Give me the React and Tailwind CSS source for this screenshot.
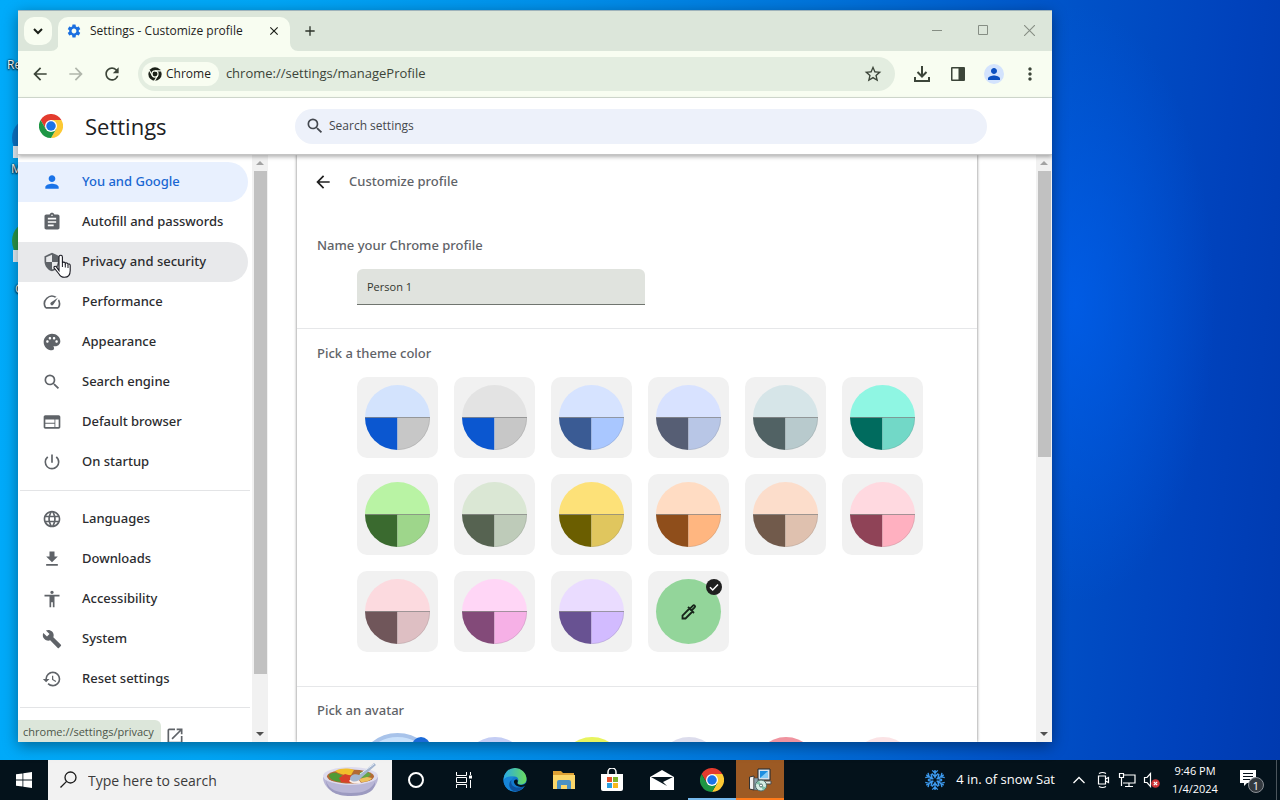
import React from "react";
import {
  MdPerson,
  MdAssignment,
  MdSecurity,
  MdPalette,
  MdSearch,
  MdWeb,
  MdPowerSettingsNew,
  MdLanguage,
  MdGetApp,
  MdAccessibility,
  MdBuild,
  MdHistory,
  MdOpenInNew,
  MdArrowBack,
  MdArrowForward,
  MdRefresh,
  MdStarOutline,
  MdMoreVert,
  MdSettings,
  MdClose,
  MdAdd,
  MdOutlineSpeed,
} from "react-icons/md";

const primaryMenu = [
  { label: "You and Google", icon: MdPerson, state: "active" },
  { label: "Autofill and passwords", icon: MdAssignment },
  { label: "Privacy and security", icon: MdSecurity, state: "hover" },
  { label: "Performance", icon: MdOutlineSpeed },
  { label: "Appearance", icon: MdPalette },
  { label: "Search engine", icon: MdSearch },
  { label: "Default browser", icon: MdWeb },
  { label: "On startup", icon: MdPowerSettingsNew },
];

const secondaryMenu = [
  { label: "Languages", icon: MdLanguage },
  { label: "Downloads", icon: MdGetApp },
  { label: "Accessibility", icon: MdAccessibility },
  { label: "System", icon: MdBuild },
  { label: "Reset settings", icon: MdHistory },
];

const themes = [
  { name: "Default", top: "#d3e3fd", left: "#0b57d0", right: "#c7c7c7" },
  { name: "Grey", top: "#e3e3e3", left: "#0b57d0", right: "#c7c7c7" },
  { name: "Blue", top: "#d6e3ff", left: "#3a5b94", right: "#a9c7ff" },
  { name: "Cool grey", top: "#d8e2ff", left: "#565e74", right: "#b8c6e6" },
  { name: "Slate", top: "#d6e5e8", left: "#516264", right: "#b8cacd" },
  { name: "Aqua", top: "#8ff6e3", left: "#006b5e", right: "#72d8c7" },
  { name: "Green", top: "#b9f3a4", left: "#3a6a2f", right: "#9ed68b" },
  { name: "Sage", top: "#dae7d4", left: "#566351", right: "#becbb9" },
  { name: "Citron", top: "#fde178", left: "#6b5e00", right: "#e0c65e" },
  { name: "Orange", top: "#ffdcc3", left: "#8f4e1b", right: "#ffb680" },
  { name: "Apricot", top: "#fcddcb", left: "#715a4b", right: "#dfc1af" },
  { name: "Rose", top: "#ffd9e0", left: "#8f4357", right: "#ffb0c0" },
  { name: "Pink", top: "#fcdadf", left: "#70565a", right: "#debfc3" },
  { name: "Fuchsia", top: "#ffd6f6", left: "#834a79", right: "#f6b0e6" },
  { name: "Violet", top: "#eadcff", left: "#685292", right: "#d2bbff" },
];

const avatars = ["#c4cdf4", "#e8f45e", "#dcdcec", "#f0939f", "#fbe3e5"];

const ChromeLogo = ({ className }) => (
  <svg viewBox="0 0 48 48" className={className} aria-hidden="true">
    <path d="M24 12H44.8A24 24 0 0 0 3.2 12L13.6 30Z" fill="#e33b2e" />
    <path d="M34.4 30 24 48A24 24 0 0 0 44.8 12H24Z" fill="#fcc934" />
    <path d="M13.6 30 3.2 12A24 24 0 0 0 24 48L34.4 30Z" fill="#1e9644" />
    <circle cx="24" cy="24" r="12" fill="#fff" />
    <circle cx="24" cy="24" r="9.5" fill="#1a73e8" />
  </svg>
);

const ChromeMono = ({ className }) => (
  <svg viewBox="0 0 48 48" className={className} aria-hidden="true">
    <circle cx="24" cy="24" r="23" fill="#1c2119" />
    <g stroke="#f8fdf1" strokeWidth="4" fill="none">
      <circle cx="24" cy="24" r="10.5" />
      <path d="M24 13.5H46M14.9 29.3 4 10.2M33.1 29.3 22 48" />
    </g>
  </svg>
);

const MenuItem = ({ item }) => {
  const Icon = item.icon;
  let tone = "text-[#2b2c2f]";
  let iconTone = "text-[#5f6368]";
  if (item.state === "active") {
    tone = "bg-[#e8f0fe] text-[#1967d2]";
    iconTone = "text-[#1a73e8]";
  }
  if (item.state === "hover") tone = "bg-[#e8e9eb] text-[#2b2c2f]";
  return (
    <a
      href="#"
      className={`flex h-10 items-center rounded-r-full pl-6 font-['Noto_Sans','Open_Sans',sans-serif] text-[13px] font-medium ${tone}`}
    >
      <Icon className={`mr-5 size-5 shrink-0 ${iconTone}`} />
      <span>{item.label}</span>
    </a>
  );
};

const ScrollBar = ({ thumb }) => (
  <div className="flex w-4 shrink-0 flex-col items-center bg-[#f1f1f1]">
    <svg viewBox="0 0 16 16" className="size-4" fill="#a3a3a3">
      <path d="M4 10l4-4 4 4z" />
    </svg>
    <div className={`w-[13px] bg-[#c1c1c1] ${thumb}`}></div>
    <div className="flex-1"></div>
    <svg viewBox="0 0 16 16" className="size-4" fill="#505050">
      <path d="M4 6l4 4 4-4z" />
    </svg>
  </div>
);

const TabStrip = () => (
  <div className="flex h-10 shrink-0 items-end bg-[#dce6da]">
    <button
      aria-label="Search tabs"
      className="mb-[6px] ml-[6px] flex size-7 items-center justify-center rounded-[10px] bg-[#f8fdf1]"
    >
      <svg viewBox="0 0 16 16" className="size-4" fill="none" stroke="#1b1f18" strokeWidth="2">
        <path d="M4 6l4 4 4-4" />
      </svg>
    </button>
    <svg viewBox="0 0 8 8" className="-ml-px size-2" fill="#f8fdf1">
      <path d="M8 0v8H0a8 8 0 0 0 8-8z" />
    </svg>
    <div className="-ml-px flex h-[34px] w-[232px] items-center rounded-t-[10px] bg-[#f8fdf1] px-2 pb-[6px]">
      <MdSettings className="size-4 text-[#1a6fe0]" />
      <span className="ml-2 flex-1 truncate text-xs text-[#1f231c]">
        Settings - Customize profile
      </span>
      <button aria-label="Close tab" className="flex size-4 items-center justify-center">
        <MdClose className="size-[14px] text-[#1b1f18]" />
      </button>
    </div>
    <svg viewBox="0 0 8 8" className="size-2" fill="#f8fdf1">
      <path d="M0 0v8h8a8 8 0 0 1-8-8z" />
    </svg>
    <button aria-label="New tab" className="mb-3 ml-1 flex size-4 items-center justify-center">
      <MdAdd className="size-4 text-[#2c332a]" />
    </button>
    <div className="flex-1"></div>
    <div className="flex h-full items-start text-[#868e84]">
      <button aria-label="Minimize" className="flex h-[38px] w-[46px] items-center justify-center">
        <svg viewBox="0 0 10 10" className="size-[10px]" stroke="currentColor">
          <path d="M0 5.5h10" />
        </svg>
      </button>
      <button aria-label="Maximize" className="flex h-[38px] w-[46px] items-center justify-center">
        <svg viewBox="0 0 10 10" className="size-[10px]" stroke="currentColor" fill="none">
          <path d="M.5.5h9v9h-9z" />
        </svg>
      </button>
      <button aria-label="Close" className="flex h-[38px] w-[46px] items-center justify-center">
        <svg viewBox="0 0 10 10" className="size-[11px]" stroke="currentColor">
          <path d="M0 0l10 10M10 0L0 10" />
        </svg>
      </button>
    </div>
  </div>
);

const Toolbar = () => (
  <div className="flex h-[47px] shrink-0 items-center border-b border-[#d5ddd2] bg-[#f8fdf1] pr-3 pl-3 text-[#3c4539]">
    <button aria-label="Back">
      <MdArrowBack className="size-5" />
    </button>
    <button aria-label="Forward" className="ml-4">
      <MdArrowForward className="size-5 text-[#b0b6ab]" />
    </button>
    <button aria-label="Reload" className="ml-4">
      <MdRefresh className="size-5" />
    </button>
    <div className="ml-4 flex h-[34px] flex-1 items-center rounded-full bg-[#e3ede0] pr-3 pl-1">
      <div className="flex h-6 items-center gap-1 rounded-full bg-[#f8fdf1] px-1.5 text-xs font-medium text-[#1f231c]">
        <ChromeMono className="size-[14px]" />
        <span className="pr-0.5">Chrome</span>
      </div>
      <input
        aria-label="Address"
        defaultValue="chrome://settings/manageProfile"
        className="ml-[7px] min-w-0 flex-1 bg-transparent text-[13px] text-[#3c4439] outline-none"
      />
      <button aria-label="Bookmark this tab">
        <MdStarOutline className="size-5" />
      </button>
    </div>
    <button aria-label="Downloads" className="ml-[18px]">
      <svg viewBox="0 0 18 18" className="size-[18px]" fill="none" stroke="currentColor" strokeWidth="2">
        <path d="M9 1v10M4.5 7L9 11.500 13.500 7M2 12v4h14v-4" />
      </svg>
    </button>
    <button aria-label="Side panel" className="ml-[18px]">
      <svg viewBox="0 0 18 18" className="size-[18px]" fill="currentColor">
        <path
          fillRule="evenodd"
          d="M3 2h12a1 1 0 0 1 1 1v12a1 1 0 0 1-1 1H3a1 1 0 0 1-1-1V3a1 1 0 0 1 1-1zm.5 1.500v11h6v-11z"
        />
      </svg>
    </button>
    <button
      aria-label="Profile"
      className="ml-[17px] flex size-5 items-center justify-center rounded-full bg-[#d3e3fd]"
    >
      <MdPerson className="size-[18px] text-[#0b4fc0]" />
    </button>
    <button aria-label="Menu" className="ml-4">
      <MdMoreVert className="size-5" />
    </button>
  </div>
);

const Swatch = ({ theme }) => (
  <button
    aria-label={theme.name}
    className="flex size-[81px] items-center justify-center rounded-[10px] bg-[#f1f1f1]"
  >
    <svg viewBox="0 0 65 65" className="size-[65px]">
      <path d="M0 32.500a32.500 32.500 0 0 1 65 0z" fill={theme.top} />
      <path d="M0 32.500h32.500V65A32.500 32.500 0 0 1 0 32.500z" fill={theme.left} />
      <path d="M65 32.500H32.500V65A32.500 32.500 0 0 0 65 32.500z" fill={theme.right} />
      <path d="M0 32.500h65" stroke="#6b6b6b" strokeOpacity=".6" />
      <path
        d="M64.700 33A32.200 32.200 0 0 1 33 64.700"
        fill="none"
        stroke="#6b6b6b"
        strokeOpacity=".3"
        strokeWidth=".6"
      />
    </svg>
  </button>
);

const SettingsPage = () => (
  <div className="flex min-h-0 flex-1 flex-col bg-white">
    <header className="z-10 flex h-[57px] shrink-0 items-center border-b border-[#c4c4c4] pl-[21px] shadow-[0_2px_4px_rgba(0,0,0,0.3)]">
      <ChromeLogo className="size-6 shrink-0" />
      <h1 className="ml-[22px] w-[210px] text-[22px] leading-none font-medium text-[#202124]">
        Settings
      </h1>
      <div className="flex h-[35px] w-full max-w-[692px] items-center rounded-full bg-[#edf1fa] px-2">
        <MdSearch className="size-6 shrink-0 p-0.5 text-[#44484f]" />
        <input
          aria-label="Search settings"
          placeholder="Search settings"
          className="ml-0.5 w-full bg-transparent text-xs outline-none placeholder:text-[#45484d]"
        />
      </div>
    </header>

    <div className="flex min-h-0 flex-1">
      <nav className="w-[234px] shrink-0 overflow-hidden pt-[7px]">
        <div className="pr-1">
          {primaryMenu.map((item) => (
            <MenuItem key={item.label} item={item} />
          ))}
        </div>
        <div className="mx-0.5 my-2 border-t border-[#e3e4e6]"></div>
        <div className="pr-1">
          {secondaryMenu.map((item) => (
            <MenuItem key={item.label} item={item} />
          ))}
        </div>
        <div className="mx-0.5 my-2 border-t border-[#e3e4e6]"></div>
        <a
          href="#"
          aria-label="Extensions"
          className="flex h-10 items-center pl-[147px]"
        >
          <MdOpenInNew className="size-5 text-[#5f6368]" />
        </a>
      </nav>
      <ScrollBar thumb="h-[503px]" />

      <main className="flex min-w-0 flex-1 overflow-hidden pl-[29px]">
        <div className="w-full max-w-[680px] shadow-[0_0_3px_rgba(0,0,0,0.55)]">
          <div className="flex h-[54px] items-center pl-4">
            <button aria-label="Go back">
              <MdArrowBack className="size-5 text-[#1f1f1f]" />
            </button>
            <h2 className="ml-4 font-['Noto_Sans','Open_Sans',sans-serif] text-[13px] font-medium text-[#5f6368]">
              Customize profile
            </h2>
          </div>
          <section className="h-[120px] border-b border-[#e6e7e9] px-5 pt-[26px]">
            <label
              htmlFor="profile"
              className="block font-['Noto_Sans','Open_Sans',sans-serif] text-[13px] leading-5 font-medium text-[#5f6368]"
            >
              Name your Chrome profile
            </label>
            <input
              id="profile"
              defaultValue="Person 1"
              className="mt-[14px] ml-10 h-9 w-72 rounded-t-md border-b border-[#70756f] bg-[#e0e3de] px-[10px] text-[11px] text-[#33372f] outline-none"
            />
          </section>
          <section className="border-b border-[#e6e7e9] px-5 pt-[14px] pb-[34px]">
            <h3 className="font-['Noto_Sans','Open_Sans',sans-serif] text-[13px] leading-5 font-medium text-[#5f6368]">
              Pick a theme color
            </h3>
            <div className="mt-[14px] ml-10 flex flex-wrap gap-4">
              {themes.map((theme) => (
                <Swatch key={theme.name} theme={theme} />
              ))}
              <button
                aria-label="Custom color"
                className="relative flex size-[81px] items-center justify-center rounded-[10px] bg-[#f1f1f1]"
              >
                <span className="flex size-[65px] items-center justify-center rounded-full bg-[#93d59a]">
                  <svg viewBox="0 0 20 20" className="size-5" fill="none" stroke="#17251a" strokeWidth="1.800">
                    <path d="M10.500 6.500L3.500 13.500v3h3l7-7M9 5l6 6M12.500 8.500l3.200-3.200a1.200 1.200 0 0 0-1.700-1.700l-3 3" />
                  </svg>
                </span>
                <span className="absolute top-2 right-[7px] flex size-4 items-center justify-center rounded-full bg-[#1f1f1f]">
                  <svg viewBox="0 0 16 16" className="size-4" fill="none" stroke="#fff" strokeWidth="1.500">
                    <path d="M4 8.300l2.700 2.700L12 5.500" />
                  </svg>
                </span>
              </button>
            </div>
          </section>
          <section className="px-5 pt-[13px]">
            <h3 className="font-['Noto_Sans','Open_Sans',sans-serif] text-[13px] leading-5 font-medium text-[#5f6368]">
              Pick an avatar
            </h3>
            <div className="mt-[13px] ml-10 flex gap-4">
              <button
                aria-label="Avatar 1"
                className="relative size-[81px] shrink-0 rounded-full border-4 border-[#a8c3ea] bg-[#c9e1fb]"
              >
                <span className="absolute top-0 right-1 size-[18px] rounded-full bg-[#1a6ad8]"></span>
              </button>
              {avatars.map((color, index) => (
                <button
                  key={color}
                  aria-label={`Avatar ${index + 2}`}
                  className="flex w-[81px] shrink-0 justify-center pt-1"
                >
                  <span
                    className="size-16 rounded-full"
                    style={{ backgroundColor: color }}
                  ></span>
                </button>
              ))}
            </div>
          </section>
        </div>
      </main>
      <ScrollBar thumb="h-[286px]" />
    </div>
  </div>
);

const DesktopIcons = () => (
  <div className="absolute top-14 left-0 text-[12px] text-white [text-shadow:0_1px_2px_#000,0_0_2px_#000]">
    <span className="absolute top-0 left-[7px]">Recycle</span>
    <svg viewBox="0 0 40 40" className="absolute top-[60px] left-[12px] size-10">
      <circle cx="20" cy="22" r="20" fill="#0c74c8" />
    </svg>
    <span className="absolute top-[90px] left-[13px] h-3 w-3 bg-[#e6f2fb]"></span>
    <span className="absolute top-[104px] left-[11px]">Microsoft</span>
    <svg viewBox="0 0 40 40" className="absolute top-[165px] left-[12px] size-10">
      <circle cx="20" cy="20" r="20" fill="#2b9a4b" />
    </svg>
    <span className="absolute top-[194px] left-[13px] h-3 w-3 bg-[#e6f2fb]"></span>
    <span className="absolute top-[224px] left-[15px]">Google</span>
  </div>
);

const HandCursor = () => (
  <svg
    viewBox="0 0 18 24"
    className="pointer-events-none absolute top-[254px] left-[53px] z-20 h-6 w-[18px]"
    aria-hidden="true"
  >
    <path
      d="M6 16.500V3a1.700 1.700 0 0 1 3.400 0v6c.3-1.300 2.700-1.200 2.900.5.500-1 2.500-.8 2.700.8.600-.7 2.200-.3 2.200 1.200v5c0 4-2 6.800-5.700 6.800-3 0-4.500-1.500-5.700-3.600L1.200 14c-.7-1.300.9-2.400 2-1.300z"
      fill="#fff"
      stroke="#1a1a22"
      strokeWidth="1.100"
    />
    <path d="M9.400 9v4M12.300 10v3.500M15 11v3" stroke="#1a1a22" fill="none" />
  </svg>
);

const SoupBowl = () => (
  <svg viewBox="0 0 58 34" className="h-[34px] w-[58px]" aria-hidden="true">
    <path d="M1 14c0 10 9 18 28 18s27-9 27-18z" fill="#b9b6d6" />
    <path d="M4 18c3 9 12 12 25 12 12 0 20-3 24-11 1 8-7 14-24 14S5 27 4 18z" fill="#9c9ac0" />
    <ellipse cx="28.500" cy="13" rx="27.500" ry="9" fill="#dddbed" />
    <ellipse cx="28.500" cy="13.500" rx="23.500" ry="7" fill="#b26a35" />
    <path d="M7 12c4-4 10-2 14 2l-2 5c-6 0-12-3-12-7z" fill="#4f9a35" />
    <path d="M13 8c6-3 13-3 19-1l-3 5c-5 1-12-1-16-4z" fill="#f2bf2c" />
    <path d="M17 15l6-4 7 2-2 7-9-1z" fill="#d8402a" />
    <path d="M38 9c5-1 10 0 11 3l-6 4-6-2z" fill="#66a544" />
    <path d="M37 16l8-2 5 1c-2 3-6 4-11 4z" fill="#edc05b" />
    <path d="M27 18c3-4 8-4 10-1l2 3c-4 1-9 1-12-2z" fill="#fbeee8" />
    <path d="M28 16c0-4 5-6 9-4L52 0l2 2-15 13c-2 4-9 5-11 1z" fill="#a4b5cf" />
    <path d="M38 11L52 1" stroke="#e8edf6" />
  </svg>
);

const TaskbarApps = () => (
  <div className="flex h-full">
    <button aria-label="Cortana" className="flex w-12 items-center justify-center">
      <span className="size-4 rounded-full border-2 border-white"></span>
    </button>
    <button aria-label="Task view" className="flex w-12 items-center justify-center">
      <svg viewBox="0 0 18 18" className="size-[18px]" fill="none" stroke="#fff">
        <path d="M1.500 1v3.500h10V1M1.500 17v-3.500h10V17M1.500 6.500h10v5h-10zM15.500 1v3M15.500 9v8" />
        <path d="M14 4.500h3v3h-3z" fill="#fff" stroke="none" />
      </svg>
    </button>
    <button aria-label="Edge" className="flex w-[54px] items-center justify-center">
      <svg viewBox="0 0 48 48" className="size-6">
        <defs>
          <linearGradient id="edgeTop" x1="0" x2="1">
            <stop offset="0" stopColor="#29a9e6" />
            <stop offset="1" stopColor="#6bdc5c" />
          </linearGradient>
        </defs>
        <circle cx="24" cy="24" r="23" fill="#1379ce" />
        <path d="M1 24A23 23 0 0 1 47 22c0 8-6 11-12 11-5 0-7-2-6-4 4-5 1-12-6-12C13 17 6 18 1 24z" fill="url(#edgeTop)" />
        <path d="M17 24c-5 8 0 20 11 23A23 23 0 0 1 1 24c5-7 15-8 22-6-3 1-5 3-6 6z" fill="#1685d8" />
        <path d="M17 24c-4 12 10 20 25 12-5 9-14 12-21 10-10-4-11-17-4-22z" fill="#0d519e" />
        <path d="M29 29c-1 3 2 5 7 5 5 0 9-2 11-6 0 3-1 6-3 8-9 4-20 1-22-7-1-5 3-7 6-6 2 2 2 4 1 6z" fill="#04131c" />
      </svg>
    </button>
    <button aria-label="File Explorer" className="flex w-11 items-center justify-center">
      <svg viewBox="0 0 24 20" className="h-5 w-6">
        <path d="M1 1h8l2 2h11v16H1z" fill="#dda034" />
        <path d="M1 5h22v14H1z" fill="#fbd669" />
        <path d="M5 19v-7a2 2 0 0 1 2-2h10a2 2 0 0 1 2 2v7h-4v-4H9v4z" fill="#4a90c4" />
      </svg>
    </button>
    <button aria-label="Microsoft Store" className="flex w-[52px] items-center justify-center">
      <svg viewBox="0 0 24 24" className="size-6">
        <path d="M8 6V4a4 4 0 0 1 8 0v2" fill="none" stroke="#fff" strokeWidth="1.500" />
        <path d="M1 6h22v15a2 2 0 0 1-2 2H3a2 2 0 0 1-2-2z" fill="#fff" />
        <path d="M7 9h5v5H7z" fill="#e8502c" />
        <path d="M13 9h5v5h-5z" fill="#7fb52c" />
        <path d="M7 15h5v5H7z" fill="#2a9fe0" />
        <path d="M13 15h5v5h-5z" fill="#f8b91c" />
      </svg>
    </button>
    <button aria-label="Mail" className="flex w-12 items-center justify-center">
      <svg viewBox="0 0 24 20" className="h-5 w-6">
        <path d="M0 7l12-7 12 7v13H0z" fill="#fff" />
        <path d="M1 7h22l-10 5 4 4L1 7z" fill="#06141d" />
      </svg>
    </button>
    <div className="flex w-[50px] justify-end">
      <button
        aria-label="Chrome"
        className="flex w-12 items-center justify-center border-b-2 border-[#76b9ed] pt-0.5"
      >
        <ChromeLogo className="size-6" />
      </button>
    </div>
    <button
      aria-label="Installer"
      className="flex w-12 items-center justify-center border-b-2 border-[#ff7a1a] bg-[#9c5a24] pt-0.5"
    >
      <svg viewBox="0 0 24 24" className="size-6">
        <path d="M10 1h12v11H10z" fill="#d9e2ea" stroke="#1c2630" />
        <path d="M12 3h8v7h-8z" fill="#1c8ee0" />
        <path d="M12 10l8-7v7z" fill="#86ccf5" />
        <path d="M10 13h13v3H10z" fill="#e4e4dc" stroke="#4a4a4a" />
        <path d="M1.500 9L6 8v14l-4.500-1z" fill="#f1f1f1" stroke="#333" />
        <path d="M6 10h4v12H6z" fill="#8aa0aa" stroke="#333" strokeWidth=".5" />
        <circle cx="13" cy="17.500" r="5.500" fill="#d5ece4" stroke="#4c6a66" />
        <path d="M13 17.500l-5-2 3-3zM13 17.500l5 2-3 3z" fill="#7dbfa6" />
        <circle cx="13" cy="17.500" r="1.500" fill="#fff" stroke="#4c6a66" />
      </svg>
    </button>
  </div>
);

const Snowflake = () => (
  <svg viewBox="0 0 24 24" className="size-[22px]" fill="none" stroke="#3d9bf0" strokeWidth="1.500">
    {[0, 60, 120, 180, 240, 300].map((deg) => (
      <path
        key={deg}
        d="M12 10V1M9 1.500l3 3 3-3M8.500 5l3.500 3.500L15.500 5"
        transform={`rotate(${deg} 12 12)`}
      />
    ))}
  </svg>
);

const Tray = () => (
  <div className="flex h-full items-center text-white">
    <Snowflake />
    <span className="ml-[10px] text-[13px] whitespace-nowrap">4 in. of snow Sat</span>
    <button aria-label="Show hidden icons" className="ml-[17px]">
      <svg viewBox="0 0 14 14" className="size-[14px]" fill="none" stroke="#fff" strokeWidth="1.300">
        <path d="M1.500 10L7 4.500l5.500 5.500" />
      </svg>
    </button>
    <svg viewBox="0 0 14 18" className="ml-[10px] h-[18px] w-[14px]" fill="none" stroke="#fff" strokeWidth="1.200">
      <path d="M2.500 5h7v8h-7zM9.500 8l3-1.500v5L9.500 10M3 2.500q3.500-2 7 0M3 15.500q3.500 2 7 0" />
    </svg>
    <svg viewBox="0 0 18 16" className="ml-2 h-4 w-[18px]" fill="none" stroke="#fff" strokeWidth="1.200">
      <path d="M6 3h11v8H5M11 11v3M7 14.500h8M1.500 1.500h4v4h-4zM3.500 5.500V14" />
    </svg>
    <svg viewBox="0 0 18 16" className="ml-[7px] h-4 w-[18px]" fill="none" stroke="#fff" strokeWidth="1.200">
      <path d="M1.500 5.500H4l3.500-4v13l-3.500-4H1.500z" />
      <circle cx="12.500" cy="11.500" r="4.300" fill="#d13438" stroke="none" />
      <path d="M10.800 9.800l3.400 3.400M14.200 9.800l-3.400 3.400" />
    </svg>
    <div className="ml-[9px] w-[50px] text-center text-[11px] leading-[18px] whitespace-nowrap">
      <div>9:46 PM</div>
      <div>1/4/2024</div>
    </div>
    <button aria-label="Notifications" className="relative ml-[18px] size-6">
      <svg viewBox="0 0 24 24" className="size-6">
        <path d="M2 2h16v13H9l-3 3v-3H2z" fill="#fff" />
        <path d="M5 5.500h10M5 8.500h10M5 11.500h7" stroke="#06101a" />
      </svg>
      <span className="absolute top-[9px] left-[10px] flex size-4 items-center justify-center rounded-full border border-[#8b9096] bg-[#33393f] text-[11px] leading-none">
        1
      </span>
    </button>
    <div className="ml-[14px] h-full w-1 border-l border-[#4b555c]"></div>
  </div>
);

const App = () => {
  return (
    <div className="flex h-screen flex-col overflow-hidden bg-[#0078d7] font-['Open_Sans','Noto_Sans',sans-serif]">
      <div className="relative flex-1 bg-[radial-gradient(ellipse_140px_300px_at_84%_40%,rgba(0,96,240,0.7),transparent),linear-gradient(95deg,#00abfa_0%,#00a6f6_20%,#008fea_42%,#0072da_62%,#0052c8_80%,#0042bc_92%,#003ab0_100%)]">
        <DesktopIcons />
        <div className="absolute top-[10px] right-[228px] bottom-[18px] left-[18px] flex flex-col overflow-hidden border-t border-[#9fb3bb] shadow-[0_4px_14px_rgba(0,0,0,0.4)]">
          <TabStrip />
          <Toolbar />
          <SettingsPage />
          <div className="absolute bottom-0 left-0 z-10 rounded-tr-md bg-[#dce6da] pt-[3px] pr-[7px] pb-px pl-[5px] text-[11px] leading-[18px] text-[#4c5549]">
            chrome://settings/privacy
          </div>
        </div>
        <HandCursor />
      </div>

      <div className="flex h-10 shrink-0 items-center bg-[#04121b]">
        <button aria-label="Start" className="flex h-full w-12 items-center justify-center">
          <svg viewBox="0 0 16 16" className="size-4" fill="#fff">
            <path d="M0 2.300l6.500-.9v6.200H0zM7.300 1.300L16 0v7.600H7.300zM0 8.400h6.500v6.200L0 13.700zM7.300 8.400H16V16l-8.700-1.300z" />
          </svg>
        </button>
        <div className="flex h-full w-[344px] items-center bg-[#f2f2f2] pr-3 pl-3">
          <svg viewBox="0 0 18 18" className="size-[18px] shrink-0" fill="none" stroke="#1b1b1b" strokeWidth="1.300">
            <circle cx="10.500" cy="6.500" r="5.500" />
            <path d="M6.600 10.400L.5 16.500" />
          </svg>
          <input
            aria-label="Type here to search"
            placeholder="Type here to search"
            className="ml-[10px] min-w-0 flex-1 bg-transparent text-[14px] outline-none placeholder:text-[#3b3b3b]"
          />
          <SoupBowl />
        </div>
        <TaskbarApps />
        <div className="flex-1"></div>
        <Tray />
      </div>
    </div>
  );
};

export default App;
